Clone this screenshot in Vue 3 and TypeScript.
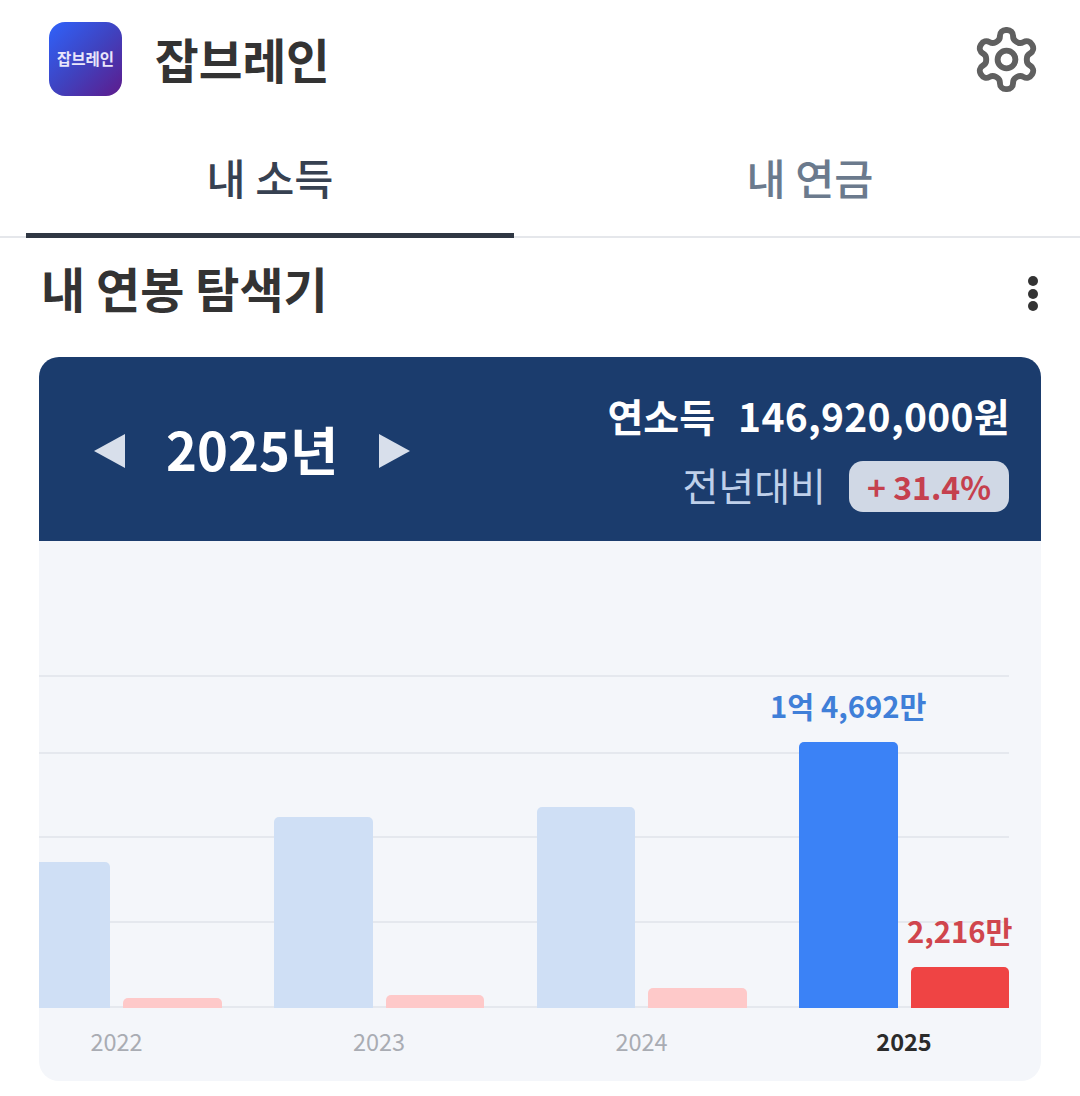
<script setup lang="ts">
import { ref } from "vue";

interface YearBar {
  year: number;
  income: number;
  tax: number;
  incomeLabel?: string;
  taxLabel?: string;
}

const tabs = ["내 소득", "내 연금"];
const activeTab = ref(0);

const years: YearBar[] = [
  { year: 2022, income: 146, tax: 10 },
  { year: 2023, income: 191, tax: 13 },
  { year: 2024, income: 201, tax: 20 },
  { year: 2025, income: 266, tax: 41, incomeLabel: "1억 4,692만", taxLabel: "2,216만" },
];
</script>

<template>
  <div class="page">
    <header class="appBar">
      <div class="logo">잡브레인</div>
      <h1 class="appName">잡브레인</h1>
      <svg class="gear" viewBox="0 0 24 24" fill="none" stroke="#606060" stroke-width="2" stroke-linecap="round" stroke-linejoin="round">
        <path d="M12.22 2h-.44a2 2 0 0 0-2 2v.18a2 2 0 0 1-1 1.73l-.43.25a2 2 0 0 1-2 0l-.15-.08a2 2 0 0 0-2.73.73l-.22.38a2 2 0 0 0 .73 2.73l.15.1a2 2 0 0 1 1 1.72v.51a2 2 0 0 1-1 1.74l-.15.09a2 2 0 0 0-.73 2.73l.22.38a2 2 0 0 0 2.73.73l.15-.08a2 2 0 0 1 2 0l.43.25a2 2 0 0 1 1 1.73V20a2 2 0 0 0 2 2h.44a2 2 0 0 0 2-2v-.18a2 2 0 0 1 1-1.73l.43-.25a2 2 0 0 1 2 0l.15.08a2 2 0 0 0 2.73-.73l.22-.39a2 2 0 0 0-.73-2.73l-.15-.08a2 2 0 0 1-1-1.74v-.5a2 2 0 0 1 1-1.74l.15-.09a2 2 0 0 0 .73-2.73l-.22-.38a2 2 0 0 0-2.73-.73l-.15.08a2 2 0 0 1-2 0l-.43-.25a2 2 0 0 1-1-1.73V4a2 2 0 0 0-2-2z" />
        <circle cx="12" cy="12" r="3" />
      </svg>
    </header>

    <nav class="tabs">
      <div
        v-for="(tab, i) in tabs"
        :key="tab"
        class="tab"
        :class="{ active: activeTab === i }"
        @click="activeTab = i"
      >
        <span class="tabLabel">{{ tab }}</span>
      </div>
    </nav>

    <div class="sectionRow">
      <h2 class="sectionTitle">내 연봉 탐색기</h2>
      <div class="moreDots">
        <i></i>
        <i></i>
        <i></i>
      </div>
    </div>

    <section class="card">
      <div class="cardHead">
        <div class="yearPicker">
          <span class="arrow left"></span>
          <span class="yearText">2025년</span>
          <span class="arrow right"></span>
        </div>
        <div class="summary">
          <div class="incomeLine">
            <span>연소득</span>
            <span class="incomeValue">146,920,000원</span>
          </div>
          <div class="diffLine">
            <span class="diffLabel">전년대비</span>
            <span class="diffBadge">+ 31.4%</span>
          </div>
        </div>
      </div>

      <div class="chart">
        <div class="plot">
          <div class="gridLines">
            <i></i>
            <i></i>
            <i></i>
            <i></i>
          </div>
          <div class="groups">
            <div v-for="item in years" :key="item.year" class="group">
              <div class="barCol">
                <span v-if="item.incomeLabel" class="barValue blue">{{ item.incomeLabel }}</span>
                <div
                  class="bar"
                  :class="item.incomeLabel ? 'incomeOn' : 'incomeOff'"
                  :style="{ height: item.income + 'px' }"
                ></div>
              </div>
              <div class="barCol">
                <span v-if="item.taxLabel" class="barValue red">{{ item.taxLabel }}</span>
                <div
                  class="bar"
                  :class="item.taxLabel ? 'taxOn' : 'taxOff'"
                  :style="{ height: item.tax + 'px' }"
                ></div>
              </div>
            </div>
          </div>
        </div>
        <div class="axis">
          <span
            v-for="item in years"
            :key="item.year"
            class="axisLabel"
            :class="{ current: item.year === 2025 }"
          >{{ item.year }}</span>
        </div>
      </div>
    </section>
  </div>
</template>

<style>
html,
body {
  margin: 0;
  background: #ffffff;
}
</style>

<style scoped>
.page {
  width: 1080px;
  height: 1096px;
  overflow: hidden;
  font-family: "Noto Sans CJK KR", "Noto Sans", sans-serif;
  color: #333333;
}

.appBar {
  display: flex;
  align-items: center;
  height: 74px;
  padding: 22px 38px 0 49px;
}

.logo {
  display: flex;
  align-items: center;
  justify-content: center;
  width: 73px;
  height: 74px;
  padding-bottom: 3px;
  box-sizing: border-box;
  flex-shrink: 0;
  border-radius: 16px;
  background: linear-gradient(135deg, #2f62fb 0%, #3f43c0 50%, #5e1b8c 100%);
  color: #e9e6fb;
  font-size: 15.5px;
  font-weight: 700;
}

.appName {
  margin: 0 0 0 33px;
  font-size: 47.5px;
  font-weight: 700;
  line-height: 74px;
  color: #333333;
}

.gear {
  width: 71px;
  height: 71px;
  margin-left: auto;
}

.tabs {
  display: flex;
  height: 142px;
  box-sizing: border-box;
  border-bottom: 2px solid #e5e7eb;
}

.tab {
  flex: 1;
  display: flex;
  padding: 0 26px;
  height: 142px;
  box-sizing: border-box;
}

.tabLabel {
  display: flex;
  justify-content: center;
  width: 100%;
  padding-top: 51px;
  box-sizing: border-box;
  font-size: 42.5px;
  line-height: 60px;
  font-weight: 500;
  color: #6b7a8d;
  border-bottom: 5px solid transparent;
}

.tab.active .tabLabel {
  color: #374151;
  border-bottom-color: #2f3743;
}

.sectionRow {
  display: flex;
  align-items: center;
  justify-content: space-between;
  height: 119px;
  padding: 0 42px 22px 41px;
  box-sizing: border-box;
}

.sectionTitle {
  margin: 0;
  font-size: 48px;
  font-weight: 700;
  color: #333333;
}

.moreDots {
  display: flex;
  flex-direction: column;
  gap: 2.5px;
  margin-top: 14px;
}

.moreDots i {
  display: block;
  width: 10px;
  height: 10px;
  border-radius: 50%;
  background: #333333;
}

.card {
  width: 1002px;
  margin-left: 39px;
  border-radius: 20px;
  overflow: hidden;
}

.cardHead {
  display: flex;
  align-items: center;
  justify-content: space-between;
  height: 184px;
  padding: 0 32px 0 55px;
  box-sizing: border-box;
  background: #1b3c6d;
}

.yearPicker {
  display: flex;
  align-items: center;
  gap: 41px;
  margin-top: 4px;
}

.arrow {
  width: 0;
  height: 0;
  border-top: 17px solid transparent;
  border-bottom: 17px solid transparent;
}

.arrow.left {
  border-right: 31px solid #d8dfeb;
}

.arrow.right {
  border-left: 31px solid #d8dfeb;
}

.yearText {
  margin-bottom: 6px;
  font-size: 52.5px;
  line-height: 64px;
  font-weight: 700;
  color: #ffffff;
}

.summary {
  display: flex;
  flex-direction: column;
  align-items: flex-end;
  margin-top: 2px;
}

.incomeLine {
  display: flex;
  gap: 23px;
  margin-right: -1px;
  padding-top: 1px;
  font-size: 39px;
  line-height: 54px;
  font-weight: 700;
  color: #ffffff;
}

.incomeValue {
  letter-spacing: 0.3px;
}

.diffLine {
  display: flex;
  align-items: center;
  gap: 23px;
  margin-top: 17px;
}

.diffLabel {
  margin-bottom: 5px;
  font-size: 39px;
  line-height: 50px;
  color: #bfd0ea;
}

.diffBadge {
  display: flex;
  align-items: center;
  justify-content: center;
  width: 160px;
  height: 51px;
  border-radius: 14px;
  background: #d0d8e5;
  color: #c5404e;
  font-size: 32px;
  font-weight: 700;
}

.chart {
  height: 540px;
  padding-right: 32px;
  display: flex;
  flex-direction: column;
  background: #f4f6fa;
}

.plot {
  position: relative;
  height: 467px;
}

.gridLines {
  position: absolute;
  left: 0;
  right: 0;
  bottom: 0;
  display: grid;
  grid-template-rows: 77px 84px 85px 87px;
}

.gridLines i {
  display: block;
  border-top: 2px solid #e5e8ee;
}

.gridLines i:last-child {
  border-bottom: 2px solid #e5e8ee;
}

.groups {
  position: relative;
  display: flex;
  justify-content: flex-end;
  align-items: flex-end;
  gap: 52.5px;
  height: 100%;
}

.group {
  display: flex;
  align-items: flex-end;
  justify-content: space-between;
  flex-shrink: 0;
  width: 210px;
}

.barCol {
  display: flex;
  flex-direction: column;
  align-items: center;
  width: 98.5px;
}

.bar {
  width: 100%;
  border-radius: 5px 5px 0 0;
}

.barValue {
  margin-bottom: 15px;
  font-size: 29.3px;
  line-height: 44px;
  font-weight: 700;
  white-space: nowrap;
}

.barValue.blue {
  color: #3f7fd8;
}

.barValue.red {
  color: #d0454d;
}

.incomeOn {
  background: #3b82f6;
}

.incomeOff {
  background: #cfdff5;
}

.taxOn {
  background: #ef4444;
}

.taxOff {
  background: #fec9c9;
}

.axis {
  display: flex;
  justify-content: flex-end;
  gap: 52.5px;
  padding-top: 15px;
}

.axisLabel {
  flex-shrink: 0;
  width: 210px;
  text-align: center;
  font-size: 23.5px;
  line-height: 36px;
  color: #a9acb3;
}

.axisLabel.current {
  font-weight: 700;
  color: #2b2b2b;
}
</style>
